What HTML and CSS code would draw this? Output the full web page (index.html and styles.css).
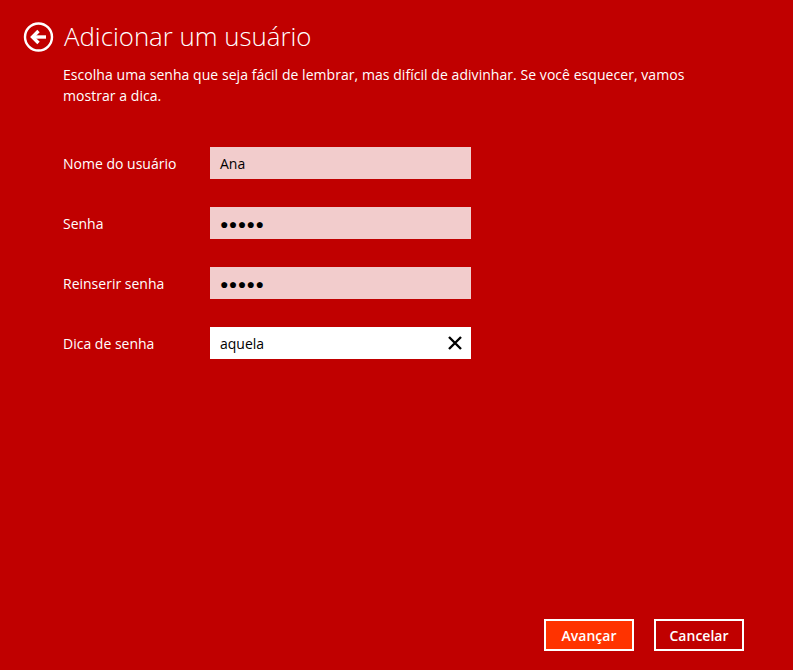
FILE: index.html
```html
<!DOCTYPE html>
<html lang="pt-BR">
<head>
    <meta charset="UTF-8">
    <meta name="viewport" content="width=device-width, initial-scale=1.0">
    <title>Adicionar um usuário</title>
    <link rel="stylesheet" href="styles.css">
</head>
<body>

<div id="app">
    <div class="header">
        <button class="back-button" aria-label="Voltar">
            <svg width="32" height="32" viewBox="0 0 32 32">
                <circle cx="15.5" cy="16" r="13.5" fill="none" stroke="#fff" stroke-width="2.4"/>
                <path d="M9.5 16H23" fill="none" stroke="#fff" stroke-width="3.4"/>
                <path d="M15.5 10L9.5 16L15.5 22" fill="none" stroke="#fff" stroke-width="3.4"/>
            </svg>
        </button>
        <h1>Adicionar um usuário</h1>
    </div>

    <p class="intro">Escolha uma senha que seja fácil de lembrar, mas difícil de adivinhar. Se você esquecer, vamos mostrar a dica.</p>

    <div class="form">
        <div class="row">
            <label>Nome do usuário</label>
            <div class="field">Ana</div>
        </div>
        <div class="row">
            <label>Senha</label>
            <div class="field dots">●●●●●</div>
        </div>
        <div class="row">
            <label>Reinserir senha</label>
            <div class="field dots">●●●●●</div>
        </div>
        <div class="row">
            <label>Dica de senha</label>
            <div class="field active">
                <span>aquela</span>
                <svg width="14" height="14" viewBox="0 0 14 14">
                    <path d="M1 1L13 13M13 1L1 13" fill="none" stroke="#000" stroke-width="2.4"/>
                </svg>
            </div>
        </div>
    </div>

    <div class="footer">
        <button class="btn primary">Avançar</button>
        <button class="btn">Cancelar</button>
    </div>
</div>

</body>
</html>
```

FILE: styles.css
```css
html, body {
    height: 100%;
}
body {
    margin: 0;
    background-color: #c00000;
    color: #fff;
    font-family: "Open Sans", "Noto Sans", Arial, sans-serif;
    font-size: 14px;
}
#app {
    display: flex;
    flex-direction: column;
    height: 100%;
    box-sizing: border-box;
    padding: 21px 49px 19px 23px;
}
.header {
    display: flex;
    align-items: center;
    gap: 9px;
    height: 32px;
}
.back-button {
    width: 32px;
    height: 32px;
    padding: 0;
    border: none;
    background: none;
}
.back-button svg {
    display: block;
}
h1 {
    margin: -3px 0 0;
    font-size: 25.8px;
    font-weight: 300;
    white-space: nowrap;
}
.intro {
    width: 660px;
    margin: 11px 0 0 40px;
    letter-spacing: 0.05px;
    line-height: 21px;
}
.form {
    display: flex;
    flex-direction: column;
    gap: 28px;
    margin: 41px 0 0 40px;
}
.row {
    display: flex;
    align-items: center;
}
.row label {
    width: 147px;
}
.field {
    display: flex;
    align-items: center;
    justify-content: space-between;
    box-sizing: border-box;
    width: 261px;
    height: 32px;
    padding: 0 9px 0 10px;
    background-color: #f2cccc;
    color: #000;
}
.field.dots {
    letter-spacing: 0.4px;
}
.field.active {
    background-color: #fff;
}
.footer {
    display: flex;
    justify-content: flex-end;
    gap: 20px;
    margin-top: auto;
}
.btn {
    width: 90px;
    height: 32px;
    padding: 0;
    border: 2px solid #fff;
    background-color: #c00000;
    color: #fff;
    font-family: inherit;
    font-size: 14px;
    font-weight: 600;
}
.btn.primary {
    background-color: #ff3300;
}
```
